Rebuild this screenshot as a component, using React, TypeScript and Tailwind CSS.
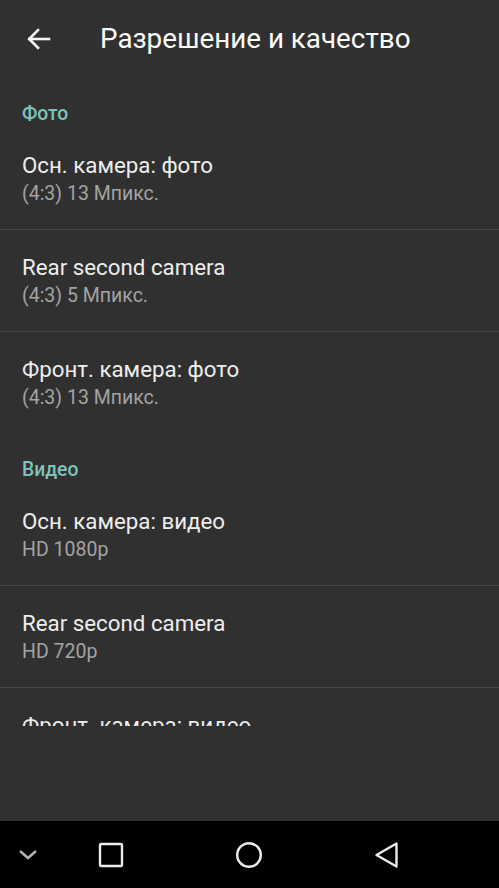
import React from "react";

const font = { fontFamily: "Roboto, 'Noto Sans', sans-serif" };

function Item({ title, sub, divider = true }: { title: string; sub?: string; divider?: boolean }) {
  return (
    <div className={divider ? "border-b border-[#474747]" : ""}>
      <div className="pl-[22px] pt-[23px] pb-[22px]">
        <div className="text-[22.3px] leading-[28px] text-[#ededed]">{title}</div>
        {sub && <div className="mt-[2px] text-[19.5px] leading-[26px] text-[#a3a3a3]">{sub}</div>}
      </div>
    </div>
  );
}

function Header({ label }: { label: string }) {
  return (
    <div className="pl-[22px] pt-[25px] pb-[2px] h-[51px]">
      <div className="text-[19.3px] leading-[24px] font-medium text-[#7cc4b9]">{label}</div>
    </div>
  );
}

export default function App() {
  return (
    <div className="w-[499px] h-[888px] flex flex-col bg-[#303030] overflow-hidden" style={font}>
      <div className="h-[77px] flex items-center shrink-0">
        <div className="w-[78px] flex items-center justify-center">
          <svg width="26" height="24" viewBox="0 0 26 24" fill="none" stroke="#f5f5f5" strokeWidth="2.6" strokeLinecap="square">
            <path d="M23 12H3.5" />
            <path d="M12 3.2L3.2 12L12 20.8" />
          </svg>
        </div>
        <div className="ml-[22px] text-[27.8px] text-white leading-none">Разрешение и качество</div>
      </div>
      <div className="flex-1 flex flex-col">
        <Header label="Фото" />
        <Item title="Осн. камера: фото" sub="(4:3) 13 Мпикс." />
        <Item title="Rear second camera" sub="(4:3) 5 Мпикс." />
        <Item title="Фронт. камера: фото" sub="(4:3) 13 Мпикс." divider={false} />
        <Header label="Видео" />
        <Item title="Осн. камера: видео" sub="HD 1080p" />
        <Item title="Rear second camera" sub="HD 720p" />
        <div className="h-[38px] overflow-hidden">
          <Item title="Фронт. камера: видео" divider={false} />
        </div>
      </div>
      <div className="h-[67px] bg-black shrink-0 relative flex items-center">
        <div className="w-[56px] flex justify-center">
          <svg width="20" height="12" viewBox="0 0 20 12" fill="none" stroke="#b0b0b0" strokeWidth="2.6">
            <path d="M2 2L10 9L18 2" />
          </svg>
        </div>
        <div className="w-[110px] flex justify-center">
          <svg width="26" height="26" viewBox="0 0 26 26" fill="none" stroke="#ececec" strokeWidth="2.4">
            <rect x="2" y="2" width="22" height="22" rx="1" />
          </svg>
        </div>
        <div className="w-[166px] flex justify-center">
          <svg width="28" height="28" viewBox="0 0 28 28" fill="none" stroke="#ececec" strokeWidth="2.4">
            <circle cx="14" cy="14" r="11.8" />
          </svg>
        </div>
        <div className="w-[110px] flex justify-center">
          <svg width="26" height="28" viewBox="0 0 26 28" fill="none" stroke="#ececec" strokeWidth="2.4" strokeLinejoin="round">
            <path d="M22.5 2.5V25.5L2.5 14Z" />
          </svg>
        </div>
      </div>
    </div>
  );
}
